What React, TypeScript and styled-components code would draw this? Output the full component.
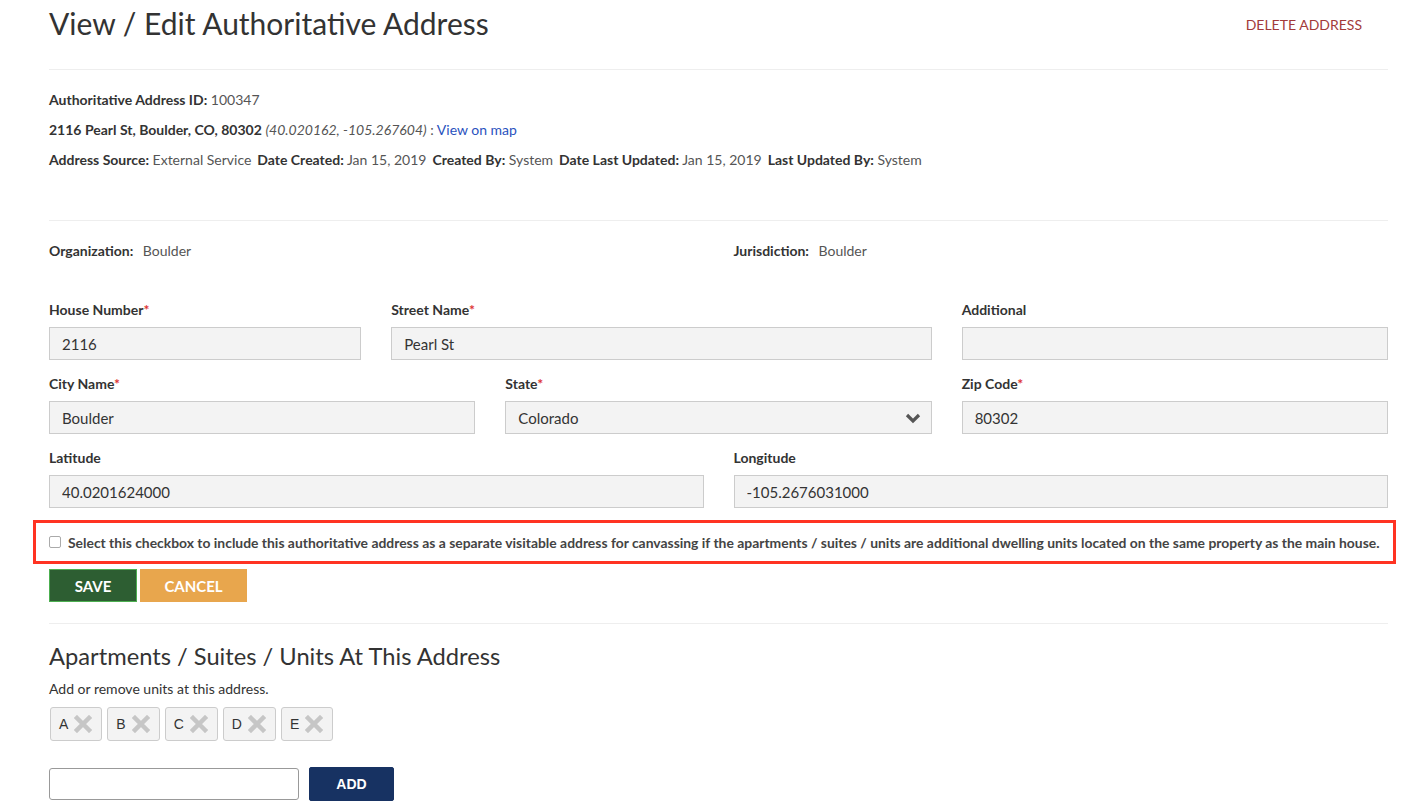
import styled, { createGlobalStyle } from "styled-components";

const GlobalStyle = createGlobalStyle`
  html, body {
    margin: 0;
    padding: 0;
    background: #ffffff;
  }
  body {
    font-family: Lato, "Open Sans", "Liberation Sans", sans-serif;
    color: #333;
  }
  * { box-sizing: border-box; }
`;

const Page = styled.div`
  width: 1339px;
  margin-left: 49px;
`;

const Header = styled.div`
  display: flex;
  justify-content: space-between;
  align-items: center;
  padding-top: 6px;
  padding-bottom: 29px;
  border-bottom: 1px solid #eee;
`;

const Title = styled.h1`
  margin: 0;
  font-size: 30px;
  font-weight: 400;
  line-height: 34px;
  color: #333;
`;

const DangerLink = styled.a`
  font-size: 14px;
  color: #a33a3a;
  text-transform: uppercase;
  padding-right: 26px;
  margin-top: 2px;
  cursor: pointer;
`;

const InfoBlock = styled.div`
  padding-top: 21px;
  padding-bottom: 39px;
  border-bottom: 1px solid #eee;
`;

const InfoLine = styled.div`
  font-size: 14px;
  line-height: 18px;
  color: #555;
  margin-bottom: 12px;
  & > b {
    color: #333;
    font-weight: 700;
  }
`;

const Pair = styled.span`
  margin-right: 6px;
  b { color: #333; font-weight: 700; }
`;

const MapLink = styled.a`
  color: #2a52be;
  cursor: pointer;
`;

const Grid = styled.div`
  display: grid;
  grid-template-columns: repeat(12, 1fr);
  column-gap: 30px;
`;

const Cell = styled.div<{ $span: number }>`
  grid-column: span ${(p) => p.$span};
  margin-bottom: 15px;
`;

const OrgRow = styled(Grid)`
  padding-top: 21px;
  padding-bottom: 41px;
`;

const OrgItem = styled.div`
  grid-column: span 6;
  font-size: 14px;
  color: #555;
  line-height: 18px;
  b { color: #333; font-weight: 700; margin-right: 6px; }
`;

const Label = styled.label`
  display: block;
  font-size: 14px;
  font-weight: 700;
  color: #333;
  line-height: 17px;
  margin-bottom: 9px;
`;

const Req = styled.span`
  color: #d33;
`;

const TextField = styled.input`
  display: block;
  width: 100%;
  height: 33px;
  padding: 0 12px;
  font-family: inherit;
  font-size: 15px;
  color: #333;
  background: #f3f3f3;
  border: 1px solid #ccc;
  border-radius: 0;
  outline: none;
`;

const SelectBox = styled.div`
  display: flex;
  align-items: center;
  justify-content: space-between;
  height: 33px;
  padding: 0 10px 0 12px;
  font-size: 15px;
  color: #333;
  background: #f3f3f3;
  border: 1px solid #ccc;
`;

const CheckFrame = styled.div`
  display: flex;
  align-items: center;
  margin-left: -16px;
  margin-right: -8px;
  margin-top: -3px;
  height: 44px;
  border: 3px solid #ff3322;
  padding-left: 13px;
`;

const CheckBox = styled.span`
  width: 12px;
  height: 12px;
  border: 1px solid #aaa;
  border-radius: 2px;
  background: #fff;
  margin-right: 7px;
  flex-shrink: 0;
`;

const CheckText = styled.span`
  font-size: 13.9px;
  font-weight: 700;
  color: #444;
  white-space: nowrap;
`;

const Actions = styled.div`
  display: flex;
  gap: 3px;
  margin-top: 5px;
  padding-bottom: 21px;
  border-bottom: 1px solid #eee;
`;

const Button = styled.button<{ $tone: "save" | "cancel" | "add" }>`
  height: ${(p) => (p.$tone === "add" ? "34px" : "33px")};
  padding: 0;
  font-family: ${(p) => (p.$tone === "add" ? '"Liberation Sans", Arial, sans-serif' : "inherit")};
  font-size: ${(p) => (p.$tone === "add" ? "14px" : "15px")};
  font-weight: 700;
  color: #fff;
  text-transform: uppercase;
  border-radius: ${(p) => (p.$tone === "add" ? "2px" : "0")};
  cursor: pointer;
  background: ${(p) =>
    p.$tone === "save" ? "#2d5e32" : p.$tone === "cancel" ? "#e8a64d" : "#173262"};
  border: 1px solid
    ${(p) => (p.$tone === "save" ? "#4caf50" : p.$tone === "cancel" ? "#e8a64d" : "#173262")};
  width: ${(p) => (p.$tone === "save" ? "88px" : p.$tone === "cancel" ? "107px" : "85px")};
`;

const SubTitle = styled.h2`
  margin: 17px 0 0;
  font-size: 23.7px;
  font-weight: 400;
  line-height: 30px;
  color: #333;
`;

const Hint = styled.p`
  margin: 9px 0 0;
  font-size: 14px;
  line-height: 17px;
  color: #333;
`;

const Chips = styled.div`
  display: flex;
  gap: 5px;
  margin-top: 10px;
  margin-left: 1px;
`;

const Chip = styled.div`
  display: flex;
  align-items: center;
  gap: 6px;
  height: 34px;
  padding: 0 9px 0 8px;
  background: #f3f3f3;
  border: 1px solid #ccc;
  border-radius: 3px;
  font-family: "Liberation Sans", Arial, sans-serif;
  font-size: 14px;
  color: #333;
`;

const AddRow = styled.div`
  display: flex;
  align-items: center;
  gap: 10px;
  margin-top: 26px;
`;

const UnitInput = styled.input`
  width: 250px;
  height: 32px;
  border: 1px solid #999;
  border-radius: 3px;
  background: #fff;
  outline: none;
`;

const RemoveIcon = () => (
  <svg width="18" height="18" viewBox="0 0 18 18">
    <path d="M3 3 L15 15 M15 3 L3 15" stroke="#c6c6c6" strokeWidth="4.5" strokeLinecap="square" />
  </svg>
);

const Chevron = () => (
  <svg width="16" height="12" viewBox="0 0 16 12">
    <path d="M2 3 L8 9 L14 3" stroke="#555" strokeWidth="3.2" fill="none" />
  </svg>
);

const units = ["A", "B", "C", "D", "E"];

export default function App() {
  return (
    <Page>
      <GlobalStyle />
      <Header>
        <Title>View / Edit Authoritative Address</Title>
        <DangerLink>Delete Address</DangerLink>
      </Header>

      <InfoBlock>
        <InfoLine>
          <b>Authoritative Address ID:</b> 100347
        </InfoLine>
        <InfoLine>
          <b>2116 Pearl St, Boulder, CO, 80302</b> <i>(40.020162, -105.267604)</i> :{" "}
          <MapLink>View on map</MapLink>
        </InfoLine>
        <InfoLine>
          <Pair><b>Address Source:</b> External Service</Pair>
          <Pair><b>Date Created:</b> Jan 15, 2019</Pair>
          <Pair><b>Created By:</b> System</Pair>
          <Pair><b>Date Last Updated:</b> Jan 15, 2019</Pair>
          <Pair><b>Last Updated By:</b> System</Pair>
        </InfoLine>
      </InfoBlock>

      <OrgRow>
        <OrgItem><b>Organization:</b> Boulder</OrgItem>
        <OrgItem><b>Jurisdiction:</b> Boulder</OrgItem>
      </OrgRow>

      <Grid>
        <Cell $span={3}>
          <Label>House Number<Req>*</Req></Label>
          <TextField defaultValue="2116" />
        </Cell>
        <Cell $span={5}>
          <Label>Street Name<Req>*</Req></Label>
          <TextField defaultValue="Pearl St" />
        </Cell>
        <Cell $span={4}>
          <Label>Additional</Label>
          <TextField defaultValue="" />
        </Cell>

        <Cell $span={4}>
          <Label>City Name<Req>*</Req></Label>
          <TextField defaultValue="Boulder" />
        </Cell>
        <Cell $span={4}>
          <Label>State<Req>*</Req></Label>
          <SelectBox>
            <span>Colorado</span>
            <Chevron />
          </SelectBox>
        </Cell>
        <Cell $span={4}>
          <Label>Zip Code<Req>*</Req></Label>
          <TextField defaultValue="80302" />
        </Cell>

        <Cell $span={6}>
          <Label>Latitude</Label>
          <TextField defaultValue="40.0201624000" />
        </Cell>
        <Cell $span={6}>
          <Label>Longitude</Label>
          <TextField defaultValue="-105.2676031000" />
        </Cell>
      </Grid>

      <CheckFrame>
        <CheckBox />
        <CheckText>
          Select this checkbox to include this authoritative address as a separate visitable address for
          canvassing if the apartments / suites / units are additional dwelling units located on the same
          property as the main house.
        </CheckText>
      </CheckFrame>

      <Actions>
        <Button $tone="save">Save</Button>
        <Button $tone="cancel">Cancel</Button>
      </Actions>

      <SubTitle>Apartments / Suites / Units At This Address</SubTitle>
      <Hint>Add or remove units at this address.</Hint>

      <Chips>
        {units.map((u) => (
          <Chip key={u}>
            {u}
            <RemoveIcon />
          </Chip>
        ))}
      </Chips>

      <AddRow>
        <UnitInput />
        <Button $tone="add">Add</Button>
      </AddRow>
    </Page>
  );
}
